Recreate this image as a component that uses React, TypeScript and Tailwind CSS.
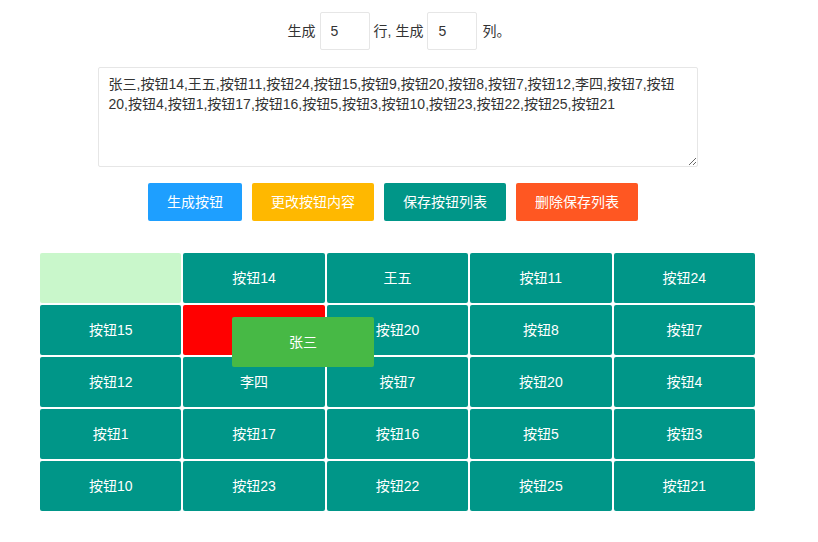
import { useState } from "react";

const FONT = "font-['Liberation_Sans','Noto_Sans_CJK_SC',sans-serif]";

const initial = [
  "张三", "按钮14", "王五", "按钮11", "按钮24",
  "按钮15", "按钮9", "按钮20", "按钮8", "按钮7",
  "按钮12", "李四", "按钮7", "按钮20", "按钮4",
  "按钮1", "按钮17", "按钮16", "按钮5", "按钮3",
  "按钮10", "按钮23", "按钮22", "按钮25", "按钮21",
];

export default function App() {
  const [rows, setRows] = useState("5");
  const [cols, setCols] = useState("5");
  const [text, setText] = useState(initial.join(","));

  return (
    <div className={`${FONT} relative w-[795px] bg-white pb-[32px] pt-[12px] text-[14px] text-[#333]`}>
      <div className="flex items-center justify-center pl-[3px]">
        <span className="mr-[4px]">生成</span>
        <input
          className="h-[38px] w-[50px] rounded-[2px] border border-[#e6e6e6] pl-[10px] outline-none"
          value={rows}
          onChange={(e) => setRows(e.target.value)}
        />
        <span className="mx-[4px]">行, 生成</span>
        <input
          className="h-[38px] w-[50px] rounded-[2px] border border-[#e6e6e6] pl-[10px] outline-none"
          value={cols}
          onChange={(e) => setCols(e.target.value)}
        />
        <span className="ml-[5px]">列。</span>
      </div>

      <div className="mt-[17px] flex justify-center">
        <textarea
          className="h-[100px] w-[600px] rounded-[2px] border border-[#e6e6e6] px-[10px] py-[6px] leading-[20px] outline-none"
          value={text}
          onChange={(e) => setText(e.target.value)}
        />
      </div>

      <div className="mt-[16px] flex gap-[10px] pl-[148px]">
        <button type="button" className="h-[38px] w-[94px] rounded-[2px] bg-[#1E9FFF] text-white">
          生成按钮
        </button>
        <button type="button" className="h-[38px] w-[122px] rounded-[2px] bg-[#FFB800] text-white">
          更改按钮内容
        </button>
        <button type="button" className="h-[38px] w-[122px] rounded-[2px] bg-[#009688] text-white">
          保存按钮列表
        </button>
        <button type="button" className="h-[38px] w-[122px] rounded-[2px] bg-[#FF5722] text-white">
          删除保存列表
        </button>
      </div>

      <div className="ml-[40px] mt-[32px] grid w-[715px] grid-cols-5 gap-[2px]">
        {initial.map((label, i) => {
          if (i === 0) {
            return <div key={i} className="h-[50px] rounded-[2px] bg-[#C9F7CB]" />;
          }
          if (i === 6) {
            return <div key={i} className="h-[50px] rounded-[2px] bg-[#FF0000]" />;
          }
          return (
            <button
              key={i}
              type="button"
              className="h-[50px] rounded-[2px] bg-[#009688] text-white"
            >
              {label}
            </button>
          );
        })}
      </div>

      <div className="absolute left-[232px] top-[317px] flex h-[50px] w-[142px] items-center justify-center rounded-[2px] bg-[#47B945] text-white">
        张三
      </div>
    </div>
  );
}
